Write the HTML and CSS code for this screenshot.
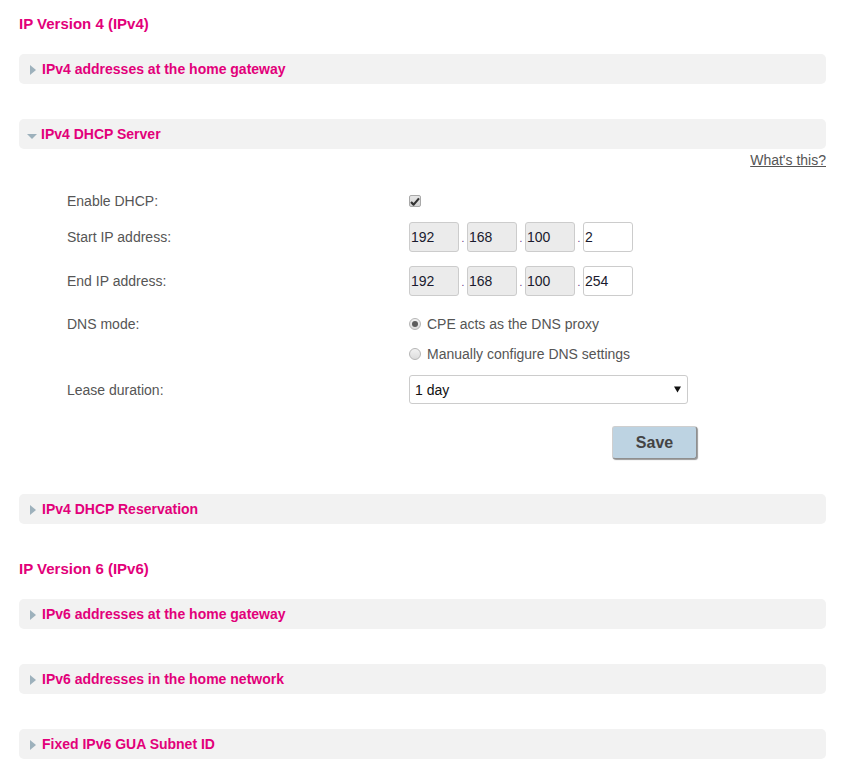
FILE: index.html
```html
<!DOCTYPE html>
<html lang="en">
<head>
<meta charset="utf-8">
<title>IP settings</title>
<link rel="stylesheet" href="styles.css">
</head>
<body>
<div class="page">
  <h2 class="section-title first">IP Version 4 (IPv4)</h2>

  <div class="panel"><span class="arrow-right"></span><span class="panel-title">IPv4 addresses at the home gateway</span></div>

  <div class="panel gap"><span class="arrow-down"></span><span class="panel-title">IPv4 DHCP Server</span></div>
  <div class="help"><a href="#">What's this?</a></div>

  <div class="form">
    <div class="row row-check">
      <div class="label">Enable DHCP:</div>
      <div class="field">
        <span class="checkbox">
          <svg width="10" height="9" viewBox="0 0 10 9"><path d="M1 5 L3.6 7.6 L9 1.4" fill="none" stroke="#333" stroke-width="2.2" stroke-linejoin="round"/></svg>
        </span>
      </div>
    </div>

    <div class="row row-ip first-ip">
      <div class="label">Start IP address:</div>
      <div class="field ip">
        <span class="octet ro">192</span><span class="dot">.</span><span class="octet ro">168</span><span class="dot">.</span><span class="octet ro">100</span><span class="dot">.</span><span class="octet">2</span>
      </div>
    </div>

    <div class="row row-ip">
      <div class="label">End IP address:</div>
      <div class="field ip">
        <span class="octet ro">192</span><span class="dot">.</span><span class="octet ro">168</span><span class="dot">.</span><span class="octet ro">100</span><span class="dot">.</span><span class="octet">254</span>
      </div>
    </div>

    <div class="row row-dns">
      <div class="label">DNS mode:</div>
      <div class="field radios">
        <div class="radio-line"><span class="radio checked"></span><span>CPE acts as the DNS proxy</span></div>
        <div class="radio-line"><span class="radio"></span><span>Manually configure DNS settings</span></div>
      </div>
    </div>

    <div class="row row-lease">
      <div class="label">Lease duration:</div>
      <div class="field">
        <div class="select"><span>1 day</span>
          <svg width="7" height="7" viewBox="0 0 7 7"><path d="M0 0.5 H7 L3.5 6.5 Z" fill="#111"/></svg>
        </div>
      </div>
    </div>

    <div class="row row-save">
      <div class="label"></div>
      <div class="field"><button class="save" type="button">Save</button></div>
    </div>
  </div>

  <div class="panel gap"><span class="arrow-right"></span><span class="panel-title">IPv4 DHCP Reservation</span></div>

  <h2 class="section-title second">IP Version 6 (IPv6)</h2>

  <div class="panel"><span class="arrow-right"></span><span class="panel-title">IPv6 addresses at the home gateway</span></div>
  <div class="panel gap"><span class="arrow-right"></span><span class="panel-title">IPv6 addresses in the home network</span></div>
  <div class="panel gap"><span class="arrow-right"></span><span class="panel-title">Fixed IPv6 GUA Subnet ID</span></div>
</div>
</body>
</html>
```

FILE: styles.css
```css
* { box-sizing: border-box; }

html, body {
  margin: 0;
  padding: 0;
  background: #ffffff;
}

body {
  font-family: "Liberation Sans", Arial, sans-serif;
  font-size: 14px;
  color: #555555;
}

.page {
  padding: 15px 18px 20px 19px;
}

.section-title {
  margin: 0 0 21px 0;
  font-size: 15px;
  line-height: 18px;
  font-weight: bold;
  color: #e2007a;
}

.section-title.second {
  margin-top: 36px;
}

.panel {
  height: 30px;
  background: #f2f2f2;
  border-radius: 5px;
  display: flex;
  align-items: center;
  padding-left: 11px;
}

.panel.gap {
  margin-top: 35px;
}

.panel-title {
  font-weight: bold;
  font-size: 14px;
  color: #e2007a;
  line-height: 30px;
}

.arrow-right {
  width: 0;
  height: 0;
  border-left: 6px solid #9db1bc;
  border-top: 5px solid transparent;
  border-bottom: 5px solid transparent;
  margin-right: 6px;
  margin-top: 1px;
}

.arrow-down {
  width: 0;
  height: 0;
  border-top: 5px solid #9db1bc;
  border-left: 5px solid transparent;
  border-right: 5px solid transparent;
  margin-left: -3px;
  margin-right: 4px;
  margin-top: 4px;
}

.help {
  margin-top: 3px;
  line-height: 16px;
  text-align: right;
}

.help a {
  color: #555555;
  text-decoration: underline;
}

.form {
  padding-left: 48px;
}

.row {
  display: flex;
  align-items: center;
}

.label {
  width: 342px;
  flex: none;
}

.field {
  flex: none;
}

.row-check {
  height: 22px;
  margin-top: 22px;
}

.checkbox {
  display: flex;
  align-items: center;
  justify-content: center;
  width: 12px;
  height: 12px;
  border: 1px solid #a9a9a9;
  border-radius: 2px;
  background: linear-gradient(#e6e6e6, #d4d4d4);
  margin-top: 0;
}

.row-ip {
  height: 30px;
  margin-top: 14px;
}

.row-ip.first-ip {
  margin-top: 10px;
}

.ip {
  display: flex;
  align-items: baseline;
}

.octet {
  display: inline-block;
  width: 50px;
  height: 30px;
  line-height: 28px;
  border: 1px solid #cccccc;
  border-radius: 3px;
  padding-left: 1px;
  color: #1a1a2e;
  background: #ffffff;
}

.octet.ro {
  background: #ebebeb;
}

.dot {
  width: 8px;
  text-align: center;
  font-size: 10px;
  color: #5a2a7a;
}

.row-dns {
  align-items: flex-start;
  margin-top: 13px;
}

.row-dns .label {
  line-height: 30px;
}

.radio-line {
  height: 30px;
  display: flex;
  align-items: center;
}

.radio {
  width: 12px;
  height: 12px;
  border-radius: 50%;
  border: 1px solid #b5b5b5;
  background: linear-gradient(#f2f2f2, #dcdcdc);
  margin-right: 6px;
  display: flex;
  align-items: center;
  justify-content: center;
}

.radio.checked::after {
  content: "";
  width: 6px;
  height: 6px;
  border-radius: 50%;
  background: #5c5c5c;
}

.row-lease {
  height: 29px;
  margin-top: 6px;
}

.select {
  width: 279px;
  height: 29px;
  border: 1px solid #cccccc;
  border-radius: 3px;
  display: flex;
  align-items: center;
  justify-content: space-between;
  padding: 0 5px 0 5px;
  color: #111111;
  background: #ffffff;
}

.select svg {
  margin-right: 1px;
}

.row-save {
  margin-top: 22px;
}

.save {
  margin-left: 203px;
  width: 85px;
  height: 33px;
  font-family: "Liberation Sans", Arial, sans-serif;
  font-weight: bold;
  font-size: 16px;
  color: #444444;
  background: #bdd3e2;
  border: 1px solid #cfcfcf;
  border-right-color: #8f8f8f;
  border-bottom-color: #8f8f8f;
  border-radius: 3px;
  box-shadow: 1px 1px 1px #9a9a9a;
  padding: 0;
}
```
